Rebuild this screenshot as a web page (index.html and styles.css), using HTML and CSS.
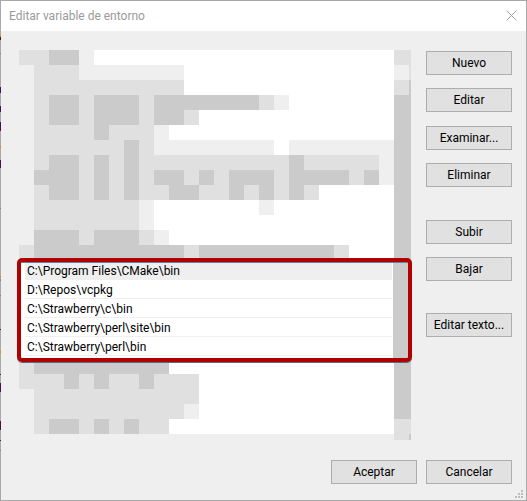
FILE: index.html
```html
<!DOCTYPE html>
<html lang="es">
<head>
<meta charset="utf-8">
<title>Editar variable de entorno</title>
<link rel="stylesheet" href="styles.css">
</head>
<body>
<div class="window">
  <header class="titlebar">
    <span class="title">Editar variable de entorno</span>
    <svg class="close" width="11" height="11" viewBox="0 0 11 11"><path d="M.5.5l10 10M10.5.5l-10 10" stroke="#a3a3a3" stroke-width="1" fill="none"/></svg>
  </header>
  <main class="content">
    <div class="listwrap">
      <div class="list">
        <svg class="mosaic" width="375" height="208" viewBox="19 50 375 208" shape-rendering="crispEdges">
          <path fill="#efefef" d="M19 65H34V245H19ZM79 50H94V80H79ZM94 65H184V80H94ZM274 95H289V110H274ZM154 125H169V140H154ZM154 140H274V155H154ZM289 140H394V155H289ZM379 155H394V185H379ZM139 200H154V230H139ZM259 200H274V215H259ZM154 230H169V245H154Z"/>
          <path fill="#e0e0e0" d="M19 50H49V65H19ZM34 65H79V80H34ZM34 80H184V95H34ZM34 95H274V110H34ZM34 110H199V125H34ZM34 125H154V155H34ZM34 155H379V185H34ZM34 185H319V200H34ZM34 200H139V230H34ZM34 230H154V245H34ZM19 245H349V258H19Z"/>
          <path fill="#cbcbcb" d="M49 50H79V65H49ZM49 95H79V125H49ZM94 95H139V125H94ZM154 95H259V110H154ZM154 110H184V125H154ZM94 125H109V140H94ZM124 140H139V155H124ZM49 155H79V170H49ZM94 155H109V200H94ZM124 155H139V200H124ZM289 155H304V200H289ZM34 170H79V185H34ZM154 170H184V185H154ZM199 170H214V185H199ZM229 170H274V185H229ZM289 170H349V185H289ZM364 170H379V185H364ZM49 185H79V200H49ZM169 185H199V200H169ZM229 185H244V200H229ZM259 185H274V200H259ZM34 230H79V245H34ZM94 230H139V245H94ZM34 245H184V258H34ZM199 245H334V258H199Z"/>
        </svg>
        <div class="rows">
          <div class="row row-selected">C:\Program Files\CMake\bin</div>
          <div class="row">D:\Repos\vcpkg</div>
          <div class="row">C:\Strawberry\c\bin</div>
          <div class="row">C:\Strawberry\perl\site\bin</div>
          <div class="row">C:\Strawberry\perl\bin</div>
        </div>
        <svg class="mosaic" width="375" height="72" viewBox="19 362 375 72" shape-rendering="crispEdges">
          <path fill="#efefef" d="M19 389H34V434H19ZM184 404H199V419H184Z"/>
          <path fill="#e0e0e0" d="M19 362H34V389H19ZM34 374H199V404H34ZM34 404H184V419H34ZM34 419H169V434H34Z"/>
          <path fill="#cbcbcb" d="M34 362H169V374H34ZM64 374H79V389H64ZM94 374H109V389H94ZM139 374H154V389H139ZM49 419H79V434H49ZM94 419H109V434H94ZM124 419H139V434H124Z"/>
        </svg>
      </div>
      <div class="scrollbar">
        <div class="sb-cap"></div>
        <div class="sb-light"></div>
        <div class="sb-mid"></div>
        <div class="sb-track"></div>
        <div class="sb-cap"></div>
        <div class="sb-foot"></div>
      </div>
      <div class="highlight"></div>
    </div>
    <div class="side">
      <button class="btn">Nuevo</button>
      <button class="btn gap-13">Editar</button>
      <button class="btn gap-14">Examinar...</button>
      <button class="btn gap-13">Eliminar</button>
      <button class="btn gap-33">Subir</button>
      <button class="btn gap-13">Bajar</button>
      <button class="btn gap-32">Editar texto...</button>
    </div>
  </main>
  <footer class="footer">
    <button class="btn">Aceptar</button>
    <button class="btn">Cancelar</button>
  </footer>
  <svg class="grip" width="8" height="8" viewBox="0 0 8 8" shape-rendering="crispEdges"><path fill="#bdbdbd" d="M6 0h2v2H6zM3 3h2v2H3zM6 3h2v2H6zM0 6h2v2H0zM3 6h2v2H3zM6 6h2v2H6z"/></svg>
  <svg class="edge" width="1" height="501" viewBox="0 0 1 501" shape-rendering="crispEdges">
    <path fill="#4a1048" d="M0 37h1v3H0ZM0 87h1v6H0ZM0 106h1v6H0ZM0 122h1v9H0ZM0 160h1v8H0ZM0 329h1v1H0ZM0 374h1v1H0ZM0 383h1v9H0ZM0 421h1v9H0ZM0 440h1v1H0Z"/>
    <path fill="#d98a2b" d="M0 35h1v2H0ZM0 146h1v2H0ZM0 276h1v2H0ZM0 351h1v2H0Z"/>
    <path fill="#5a8fc0" d="M0 53h1v1H0ZM0 208h1v1H0ZM0 279h1v2H0ZM0 295h1v1H0ZM0 450h1v1H0Z"/>
  </svg>
</div>
</body>
</html>
```
FILE: styles.css
```css
* { box-sizing: border-box; }
html, body { margin: 0; padding: 0; }
body { width: 527px; height: 501px; overflow: hidden; font-family: Roboto, "Open Sans", sans-serif; font-size: 12px; color: #000; }
.window { position: relative; width: 527px; height: 501px; border: 1px solid #a9a9a9; background: #efefef; }
.titlebar { height: 30px; background: #fff; display: flex; align-items: center; justify-content: space-between; padding: 0 9px 1px 8px; }
.title { color: #9a9a9a; font-size: 12px; }
.close { margin-top: -1px; }
.content { display: flex; gap: 15px; padding: 19px 14px 0 18px; }
.listwrap { position: relative; display: flex; width: 392px; height: 390px; align-items: flex-start; }
.list { width: 375px; height: 384px; background: #fff; display: flex; flex-direction: column; }
.mosaic { display: block; flex: none; }
.rows { height: 104px; flex: none; padding: 3px 1px 0 6px; border-right: 1px solid #cbcbcb; background: #fff; }
.row { height: 19px; line-height: 20px; padding-left: 2px; border-bottom: 1px solid #efefef; white-space: nowrap; }
.row-selected { background: #efefef; }
.scrollbar { width: 17px; height: 390px; display: flex; flex-direction: column; background: #cbcbcb; }
.sb-cap { height: 15px; background: #e0e0e0; }
.sb-light { height: 15px; background: #efefef; border-right: 2px solid #e0e0e0; }
.sb-mid { height: 15px; background: #e0e0e0; border-right: 2px solid #cbcbcb; }
.sb-track { flex: 1; }
.sb-foot { height: 6px; background: #e0e0e0; border-right: 2px solid #cbcbcb; }
.highlight { position: absolute; left: -2px; top: 208px; width: 395px; height: 104px; border: 4px solid #b00000; border-radius: 5px; box-shadow: inset 0 1px 0 #64849c, 0 1px 0 #5c6c7c; }
.side { display: flex; flex-direction: column; width: 86px; margin-top: 1px; }
.btn { display: block; flex: none; width: 86px; height: 24px; padding: 0; border: 1px solid #adadad; background: #e1e1e1; color: #000; font: inherit; font-size: 12px; line-height: 20px; }
.gap-13 { margin-top: 13px; }
.gap-14 { margin-top: 14px; }
.gap-32 { margin-top: 32px; }
.gap-33 { margin-top: 33px; }
.footer { display: flex; justify-content: flex-end; gap: 9px; padding-right: 14px; margin-top: 20px; }
.grip { position: absolute; right: 3px; bottom: 2px; }
.edge { position: absolute; left: -1px; top: -1px; }
```
